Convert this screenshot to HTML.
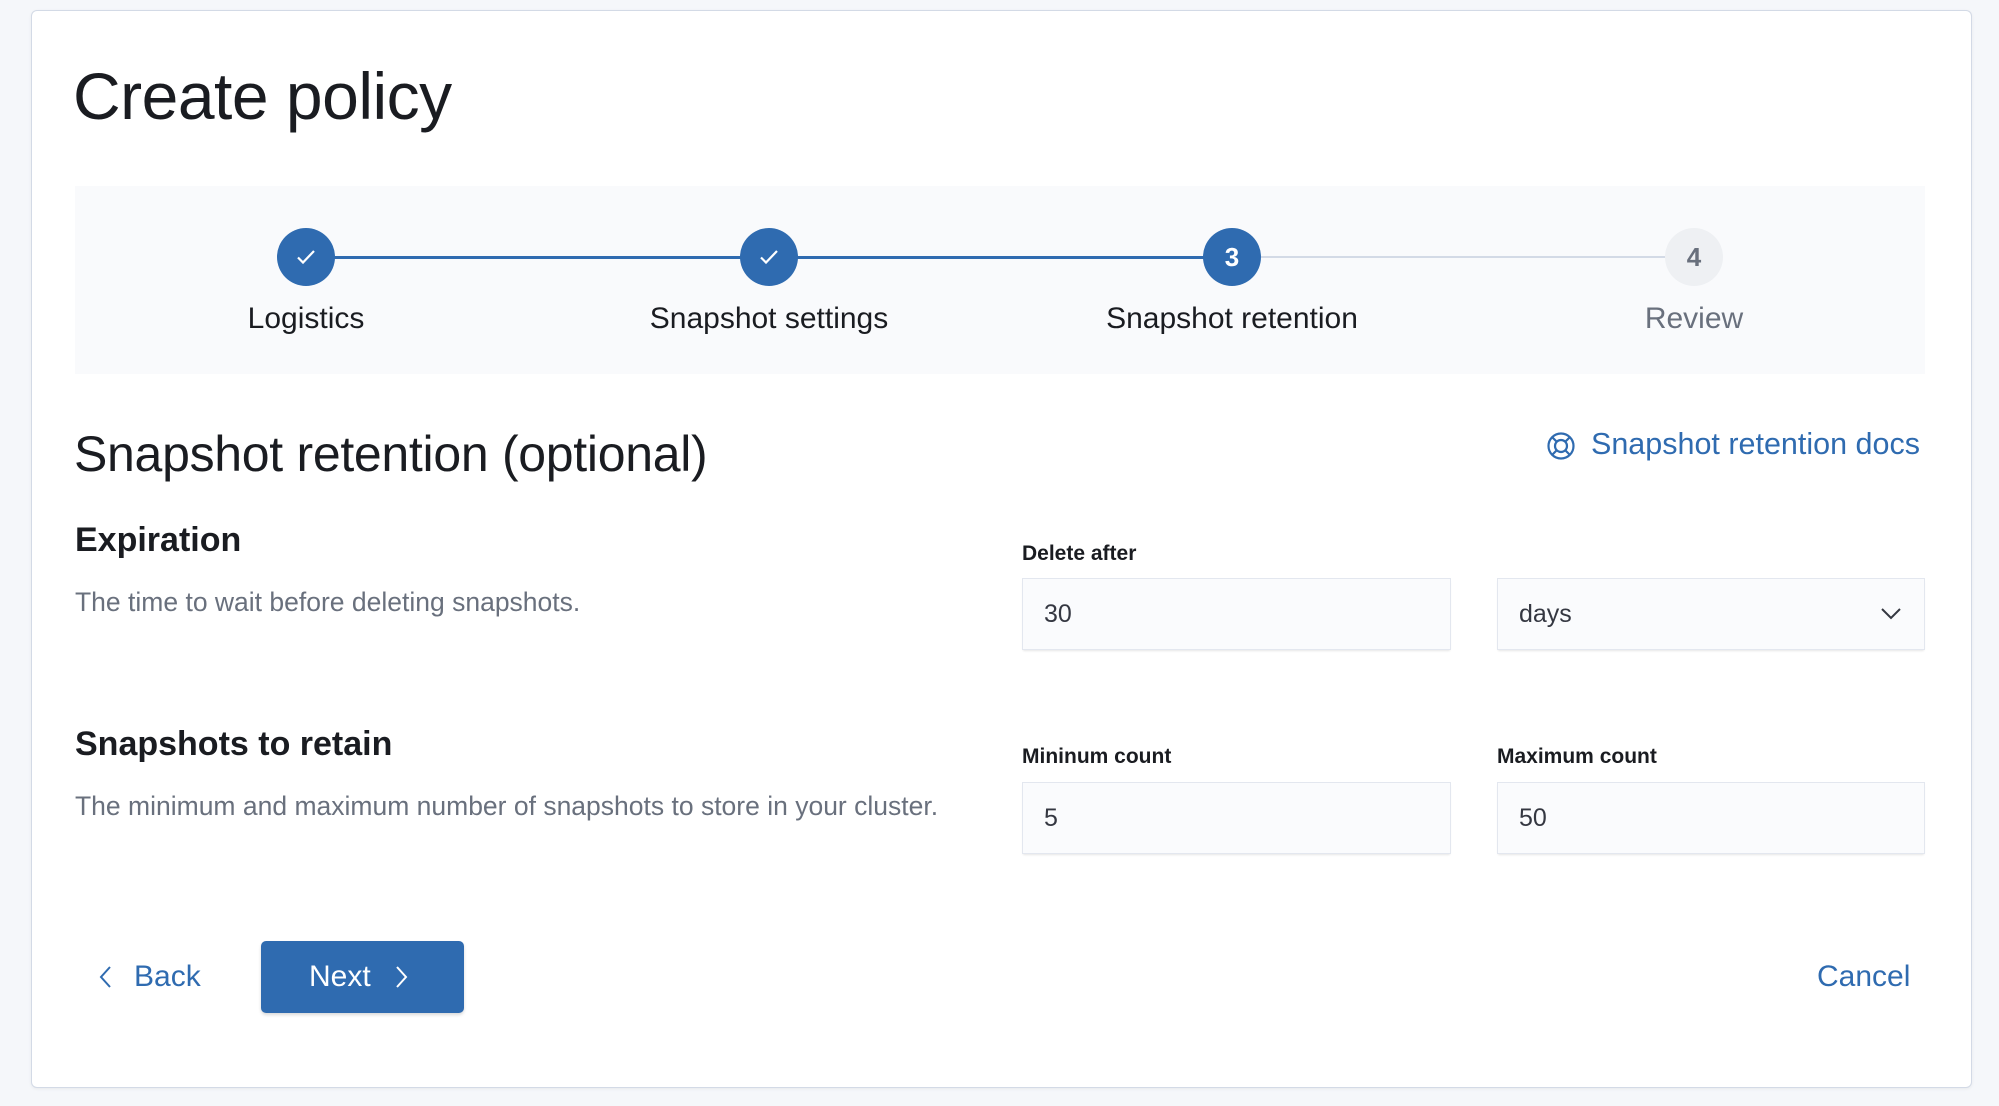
<!DOCTYPE html>
<html><head><meta charset="utf-8"><style>
*{box-sizing:border-box;margin:0;padding:0}
body{width:1999px;height:1106px;background:#f5f7fa;font-family:"Liberation Sans",sans-serif;position:relative;overflow:hidden;color:#1a1c21}
.card{position:absolute;left:31px;top:10px;width:1941px;height:1078px;background:#fff;border:1px solid #d3dae6;border-radius:6px;box-shadow:0 1px 3px rgba(0,0,0,.06)}
.a{position:absolute;white-space:nowrap}
.steps{position:absolute;left:75px;top:186px;width:1850px;height:188px;background:#f9fafc}
.line{position:absolute;height:3px;top:257px;margin-top:-1px}
.c{position:absolute;width:58px;height:58px;border-radius:50%;top:228px;background:#2f6bb0;color:#fff;font-size:26px;font-weight:bold;display:flex;align-items:center;justify-content:center}
.lbl{position:absolute;top:302px;font-size:30px;transform:translateX(-50%);white-space:nowrap}
.in{position:absolute;height:72px;background:#fafbfd;border:1px solid #e3e7ef;box-shadow:0 2px 2px -1px rgba(0,0,0,.1);font-size:25px;padding-left:21px;display:flex;align-items:center;color:#343741}
.fl{position:absolute;font-size:21px;font-weight:bold}
.h3{position:absolute;left:75px;font-size:34px;font-weight:bold}
.d{position:absolute;left:75px;font-size:26.5px;color:#69707d}
.blue{color:#2f6bb0}
</style></head><body>
<div class="card"></div>
<div class="a" style="left:73px;top:58px;font-size:66px;color:#1a1c21;letter-spacing:-0.5px">Create policy</div>
<div class="steps"></div>
<div class="line" style="left:306px;width:926px;background:#2f6bb0"></div>
<div class="line" style="left:1232px;width:462px;background:#d3dae6;height:2px"></div>
<div class="c" style="left:277px"><svg width="24" height="24" viewBox="0 0 24 24"><path d="M4 12.5l5 5L20 6" fill="none" stroke="#fff" stroke-width="2.2"/></svg></div>
<div class="c" style="left:740px"><svg width="24" height="24" viewBox="0 0 24 24"><path d="M4 12.5l5 5L20 6" fill="none" stroke="#fff" stroke-width="2.2"/></svg></div>
<div class="c" style="left:1203px">3</div>
<div class="c" style="left:1665px;background:#eef0f3;color:#69707d">4</div>
<div class="lbl" style="left:306px">Logistics</div>
<div class="lbl" style="left:769px">Snapshot settings</div>
<div class="lbl" style="left:1232px">Snapshot retention</div>
<div class="lbl" style="left:1694px;color:#69707d">Review</div>
<div class="a" style="left:74px;top:425px;font-size:50px;letter-spacing:-0.3px">Snapshot retention (optional)</div>
<svg class="a" style="left:1546px;top:431px" width="30" height="30" viewBox="0 0 30 30"><circle cx="15" cy="15" r="12.5" fill="none" stroke="#2f6bb0" stroke-width="2.2"/><circle cx="15" cy="15" r="6" fill="none" stroke="#2f6bb0" stroke-width="2.2"/><path d="M6 6l5 5M24 6l-5 5M6 24l5-5M24 24l-5-5" stroke="#2f6bb0" stroke-width="2.2"/></svg>
<div class="a blue" style="left:1591px;top:427px;font-size:30.5px">Snapshot retention docs</div>
<div class="h3" style="top:521px">Expiration</div>
<div class="d" style="top:587px">The time to wait before deleting snapshots.</div>
<div class="fl" style="left:1022px;top:542px">Delete after</div>
<div class="in" style="left:1022px;top:578px;width:429px">30</div>
<div class="in" style="left:1497px;top:578px;width:428px">days<svg style="position:absolute;right:22px;top:28px" width="22" height="14" viewBox="0 0 22 14"><path d="M2 2l9 9 9-9" fill="none" stroke="#343741" stroke-width="2"/></svg></div>
<div class="h3" style="top:725px">Snapshots to retain</div>
<div class="d" style="top:791px">The minimum and maximum number of snapshots to store in your cluster.</div>
<div class="fl" style="left:1022px;top:745px">Mininum count</div>
<div class="fl" style="left:1497px;top:745px">Maximum count</div>
<div class="in" style="left:1022px;top:782px;width:429px">5</div>
<div class="in" style="left:1497px;top:782px;width:428px">50</div>
<svg class="a" style="left:98px;top:965px" width="16" height="24" viewBox="0 0 16 24"><path d="M12 2L3 12l9 10" fill="none" stroke="#2f6bb0" stroke-width="2"/></svg>
<div class="a blue" style="left:134px;top:960px;font-size:30px">Back</div>
<div class="a" style="left:261px;top:941px;width:203px;height:72px;background:#2f6bb0;border-radius:5px;box-shadow:0 2px 3px rgba(0,0,0,.15)"></div>
<div class="a" style="left:309px;top:960px;font-size:30px;color:#fff">Next</div>
<svg class="a" style="left:393px;top:965px" width="16" height="24" viewBox="0 0 16 24"><path d="M4 2l9 10-9 10" fill="none" stroke="#fff" stroke-width="2"/></svg>
<div class="a blue" style="left:1817px;top:960px;font-size:30px">Cancel</div>
</body></html>
